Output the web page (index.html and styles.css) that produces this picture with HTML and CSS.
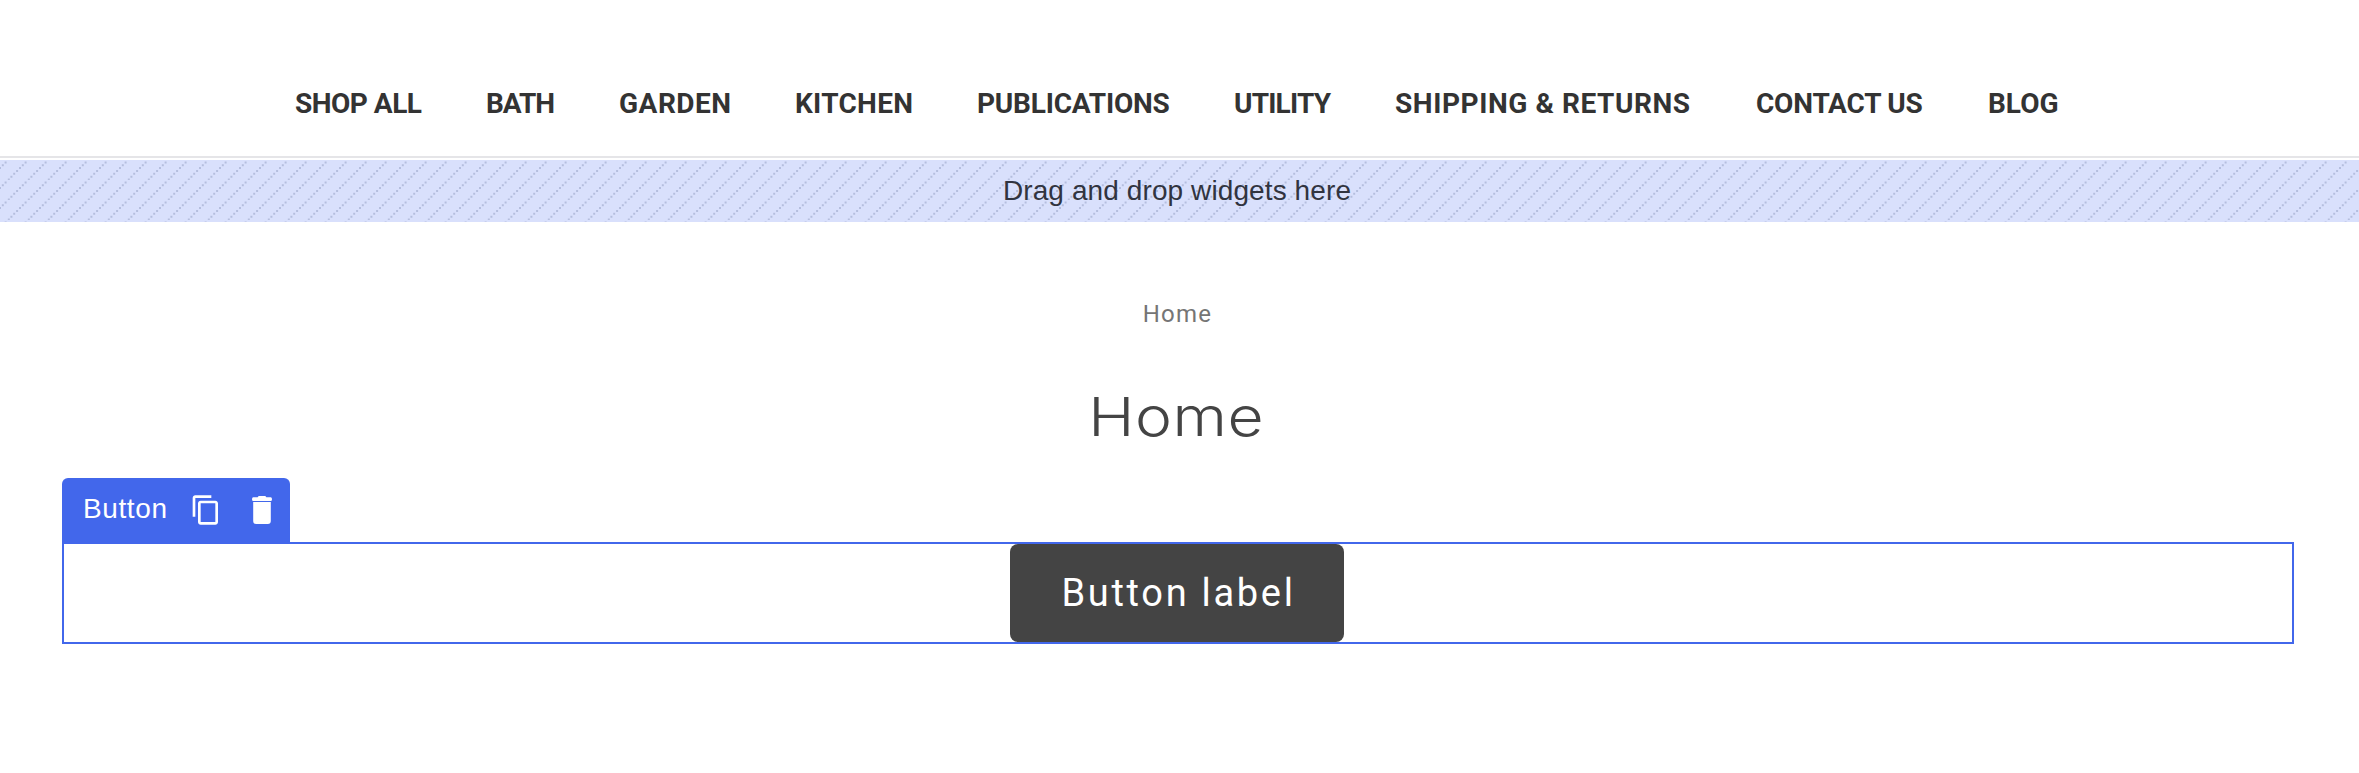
FILE: index.html
```html
<!DOCTYPE html>
<html lang="en">
<head>
<meta charset="utf-8">
<title>Home</title>
<link rel="stylesheet" href="styles.css">
</head>
<body>
<header class="header">
  <nav class="nav">
    <a class="nav-item shop">SHOP ALL</a>
    <a class="nav-item bath">BATH</a>
    <a class="nav-item garden">GARDEN</a>
    <a class="nav-item kitchen">KITCHEN</a>
    <a class="nav-item publications">PUBLICATIONS</a>
    <a class="nav-item utility">UTILITY</a>
    <a class="nav-item shipping">SHIPPING &amp; RETURNS</a>
    <a class="nav-item contact">CONTACT US</a>
    <a class="nav-item blog">BLOG</a>
  </nav>
</header>
<div class="dropzone">
  <svg class="stripes" aria-hidden="true">
    <defs>
      <pattern id="dots" width="20" height="20" patternUnits="userSpaceOnUse">
        <path fill="#b5bede" d="M4.600 1.400h2v2h-2zM1.800 4.300h2v2h-2zM-1 7.100h2v2h-2zM19 7.100h2v2h-2zM16.100 10h2v2h-2zM13.200 12.800h2v2h-2zM10.400 15.700h2v2h-2zM7.800 18.400h2v1.600h-2z"/>
      </pattern>
    </defs>
    <rect width="100%" height="100%" fill="url(#dots)"/>
  </svg>
  <span class="dropzone-text">Drag and drop widgets here</span>
</div>
<main class="page">
  <div class="breadcrumb">Home</div>
  <h1 class="title">Home</h1>
  <section class="widget">
    <div class="toolbar">
      <span class="toolbar-name">Button</span>
      <svg class="icon copy" viewBox="0 0 24 24"><path d="M16 1H4c-1.100 0-2 .9-2 2v14h2V3h12V1zm3 4H8c-1.100 0-2 .9-2 2v14c0 1.100.9 2 2 2h11c1.100 0 2-.9 2-2V7c0-1.100-.9-2-2-2zm0 16H8V7h11v14z"/></svg>
      <svg class="icon trash" viewBox="0 0 20 28"><path d="M6 .7Q6.300 0 7 0h6q.7 0 1 .7l.3.6h4.400q1.300 0 1.300 1.850T18.700 5H1.300Q0 5 0 3.150T1.300 1.300h4.400zM1.200 6h17.600v19q0 3-3 3H4.200q-3 0-3-3z"/></svg>
    </div>
    <div class="frame"><button class="button">Button label</button></div>
  </section>
</main>
</body>
</html>
```
FILE: styles.css
```css
body { margin: 0; background: #fff; color: #333; font-family: Roboto, sans-serif; }
.header { box-sizing: border-box; height: 158px; padding: 87px 0 0 295px; border-bottom: 2px solid #e5e5e8; }
.nav { display: flex; gap: 64px; }
.nav-item { font-size: 28px; line-height: 33px; font-weight: 700; white-space: nowrap; color: #333; }
.shop { width: 127px; letter-spacing: -0.5px; }
.bath { width: 69px; letter-spacing: -1px; }
.garden { width: 112px; letter-spacing: 0.5px; }
.kitchen { width: 118px; letter-spacing: 0.3px; }
.publications { width: 193px; letter-spacing: -0.2px; }
.utility { width: 97px; letter-spacing: -0.8px; }
.shipping { width: 297px; letter-spacing: 0.57px; }
.contact { width: 168px; letter-spacing: -0.2px; }
.dropzone { position: relative; display: flex; box-sizing: border-box; height: 62px; margin-top: 2px; padding-right: 5px; justify-content: center; background: #d9e0fc; }
.stripes { position: absolute; inset: 0; width: 100%; height: 100%; }
.dropzone-text { position: relative; font: 28px/62px "Liberation Sans", sans-serif; letter-spacing: 0.1px; color: #313440; }
.page { padding: 0 65px 0 62px; }
.breadcrumb { padding: 78px 1px 0 0; font-size: 24px; line-height: 28px; letter-spacing: 1.2px; text-align: center; color: #757575; }
.title { margin: 57px 0 0; padding-right: 3px; font: 350 54px/64px Inter, sans-serif; letter-spacing: 0.5px; text-align: center; color: #444; transform: scaleX(1.155); }
.widget { margin-top: 29px; }
.toolbar { display: flex; box-sizing: border-box; width: 228px; height: 64px; padding-left: 21px; border-radius: 6px 6px 0 0; background: #4267eb; color: #fff; }
.toolbar-name { width: 107px; font: 28px/61px "Liberation Sans", sans-serif; letter-spacing: 0.6px; }
.icon { fill: #fff; }
.copy { width: 32px; height: 32px; margin-top: 15.500px; }
.trash { width: 20px; height: 28px; margin: 18px 0 0 30px; }
.frame { display: flex; box-sizing: border-box; height: 102px; padding-right: 2px; justify-content: center; border: 2px solid #4267eb; }
.button { width: 334px; height: 98px; padding: 0 0 0 3px; border: 0; border-radius: 8px; background: #444; color: #fff; font: 38px Roboto, sans-serif; letter-spacing: 2.700px; }
```
